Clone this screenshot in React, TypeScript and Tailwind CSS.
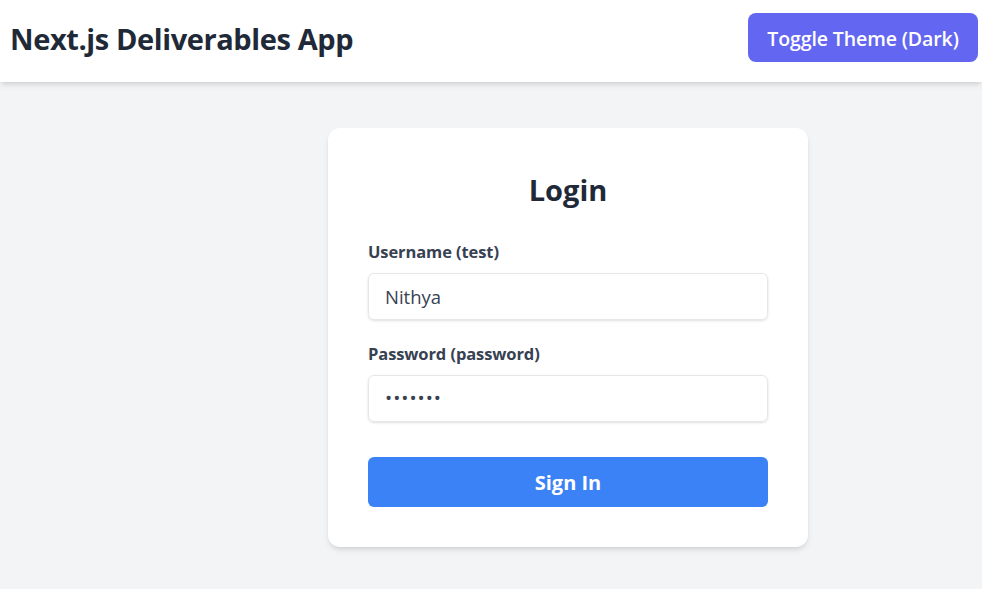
import React from "react";

export default function App() {
  return (
    <div className="min-h-[589px] bg-[#f3f4f6]" style={{ fontFamily: '"Open Sans", "Noto Sans", sans-serif' }}>
      <header className="flex h-[82px] justify-between bg-white pl-[10px] pr-[4px] shadow-md">
        <h1 className="mb-[4px] self-center text-[29px] font-bold tracking-[-0.4px] text-[#1f2937]">Next.js Deliverables App</h1>
        <button className="mt-[13px] h-[49px] w-[230px] rounded-lg bg-[#6366f1] pt-[3px] text-[19.5px] font-semibold tracking-[-0.1px] text-white">
          Toggle Theme (Dark)
        </button>
      </header>
      <main className="flex pt-[46px]">
        <div className="w-[154px] shrink-0" />
        <div className="flex flex-1 justify-center">
          <div className="w-[480px] rounded-xl bg-white px-10 pb-10 pt-[42px] shadow-md">
            <h2 className="text-center text-[29px] font-bold leading-[40px] text-[#1f2937]">Login</h2>
            <div className="mt-[30px]">
              <label className="block text-[16.5px] font-bold leading-[24px] tracking-[-0.1px] text-[#374151]">Username (test)</label>
              <div className="mt-[9px] flex h-[47px] items-center rounded-md border border-[#e5e7eb] px-4 text-[18.5px] text-[#374151] shadow-sm">
                Nithya
              </div>
            </div>
            <div className="mt-[22px]">
              <label className="block text-[16.5px] font-bold leading-[24px] tracking-[-0.1px] text-[#374151]">Password (password)</label>
              <div className="mt-[9px] flex h-[47px] items-center rounded-md border border-[#e5e7eb] px-4 text-[18px] text-[#374151] shadow-sm">
                <span className="text-[19px] tracking-[1px]">•••••••</span>
              </div>
            </div>
            <button className="mt-[35px] h-[50px] w-full rounded-md bg-[#3b82f6] pt-[2px] text-[20px] font-bold text-white">Sign In</button>
          </div>
        </div>
      </main>
    </div>
  );
}
